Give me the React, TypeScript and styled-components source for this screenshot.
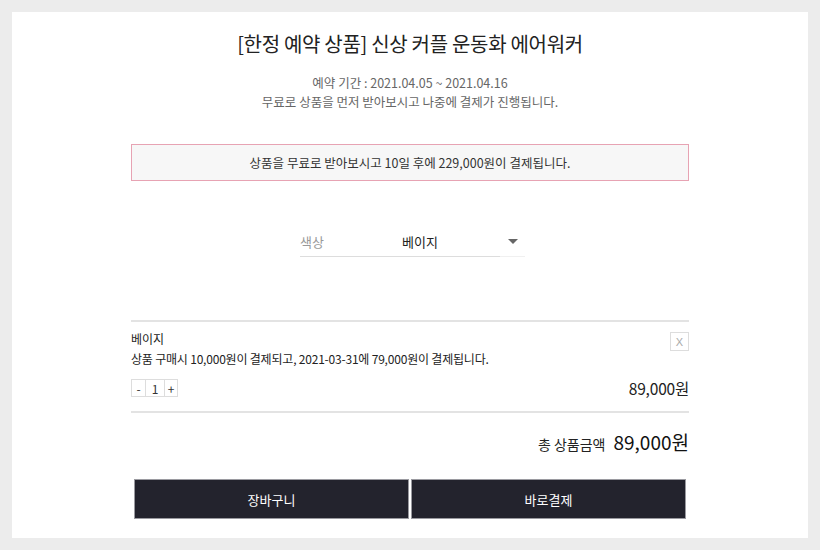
import React from "react";
import styled, { createGlobalStyle } from "styled-components";

const Global = createGlobalStyle`
  html, body { margin: 0; padding: 0; background: #ececec; }
  body { font-family: "Noto Sans CJK KR", "Noto Sans", sans-serif; color: #333; }
  * { box-sizing: border-box; }
`;

const Page = styled.div`
  width: 820px;
  height: 550px;
  padding: 12px;
  background: #ececec;
`;

const Panel = styled.div`
  width: 796px;
  height: 526px;
  background: #fff;
  padding: 17px 0 0;
  display: flex;
  flex-direction: column;
  align-items: center;
`;

const Title = styled.h1`
  margin: 0;
  font-size: 20px;
  line-height: 30px;
  font-weight: 400;
  color: #222;
  letter-spacing: -0.3px;
`;

const Sub = styled.p`
  margin: 14px 0 0;
  font-size: 12.5px;
  line-height: 19px;
  color: #666;
  text-align: center;
  font-weight: 400;
`;

const Notice = styled.div`
  margin-top: 33px;
  width: 558px;
  height: 37px;
  border: 1px solid #e7a3b3;
  background: #f7f7f7;
  display: flex;
  align-items: center;
  justify-content: center;
  font-size: 12.5px;
  color: #333;
`;

const SelectRow = styled.div`
  margin-top: 45px;
  margin-left: 5px;
  width: 225px;
  display: flex;
  height: 31px;
  font-size: 13px;
`;

const SelectLabel = styled.div`
  width: 100px;
  border-bottom: 1px solid #ddd;
  color: #999;
  display: flex;
  align-items: center;
`;

const SelectValue = styled.div`
  width: 100px;
  border-bottom: 1px solid #ddd;
  color: #222;
  display: flex;
  align-items: center;
  padding-left: 2px;
`;

const SelectArrow = styled.div`
  width: 25px;
  border-bottom: 1px solid #f0f0f0;
  display: flex;
  align-items: center;
  justify-content: center;
`;

const Item = styled.div`
  margin-top: 63px;
  width: 558px;
  border-top: 2px solid #e3e3e3;
  border-bottom: 2px solid #e3e3e3;
  padding: 7px 0 14px;
  position: relative;
`;

const ItemName = styled.div`
  font-size: 12px;
  line-height: 20px;
  color: #222;
`;

const ItemDesc = styled.div`
  font-size: 12px;
  letter-spacing: -0.2px;
  line-height: 20px;
  color: #222;
`;

const ItemFoot = styled.div`
  margin-top: 10px;
  display: flex;
  justify-content: space-between;
  align-items: center;
  height: 18px;
`;

const Qty = styled.div`
  display: flex;
  border: 1px solid #ddd;
  height: 18px;
`;

const QtyCell = styled.div<{ $w: number; $sep?: boolean }>`
  width: ${(p) => p.$w}px;
  display: flex;
  align-items: center;
  justify-content: center;
  font-size: 12px;
  color: #333;
  border-left: ${(p) => (p.$sep ? "1px solid #ddd" : "none")};
`;

const Price = styled.div`
  font-size: 15.5px;
  letter-spacing: -0.2px;
  color: #222;
`;

const Remove = styled.div`
  position: absolute;
  right: 0;
  top: 10px;
  width: 19px;
  height: 19px;
  border: 1px solid #ddd;
  display: flex;
  align-items: center;
  justify-content: center;
  font-size: 11px;
  color: #aaa;
  font-family: "Liberation Sans", sans-serif;
`;

const Total = styled.div`
  margin-top: 14px;
  width: 558px;
  display: flex;
  justify-content: flex-end;
  align-items: baseline;
  gap: 8px;
  line-height: 30px;
`;

const TotalLabel = styled.span`
  font-size: 14px;
  color: #222;
`;

const TotalValue = styled.span`
  font-size: 19px;
  color: #111;
`;

const Buttons = styled.div`
  margin-top: 20px;
  width: 552px;
  display: flex;
  gap: 2px;
`;

const Btn = styled.button`
  flex: 1;
  height: 40px;
  background: #23232d;
  border: 1px solid #9a9aa0;
  color: #fff;
  font-family: "Noto Sans CJK KR", sans-serif;
  font-size: 13px;
  cursor: pointer;
`;

export default function App() {
  return (
    <Page>
      <Global />
      <Panel>
        <Title>[한정 예약 상품] 신상 커플 운동화 에어워커</Title>
        <Sub>
          예약 기간 : 2021.04.05 ~ 2021.04.16
          <br />
          무료로 상품을 먼저 받아보시고 나중에 결제가 진행됩니다.
        </Sub>
        <Notice>상품을 무료로 받아보시고 10일 후에 229,000원이 결제됩니다.</Notice>
        <SelectRow>
          <SelectLabel>색상</SelectLabel>
          <SelectValue>베이지</SelectValue>
          <SelectArrow>
            <svg width="10" height="5" viewBox="0 0 10 5">
              <path d="M0 0 L10 0 L5 5 Z" fill="#666" />
            </svg>
          </SelectArrow>
        </SelectRow>
        <Item>
          <ItemName>베이지</ItemName>
          <ItemDesc>상품 구매시 10,000원이 결제되고, 2021-03-31에 79,000원이 결제됩니다.</ItemDesc>
          <ItemFoot>
            <Qty>
              <QtyCell $w={13}>-</QtyCell>
              <QtyCell $w={19} $sep>1</QtyCell>
              <QtyCell $w={13} $sep>+</QtyCell>
            </Qty>
            <Price>89,000원</Price>
          </ItemFoot>
          <Remove>X</Remove>
        </Item>
        <Total>
          <TotalLabel>총 상품금액</TotalLabel>
          <TotalValue>89,000원</TotalValue>
        </Total>
        <Buttons>
          <Btn>장바구니</Btn>
          <Btn>바로결제</Btn>
        </Buttons>
      </Panel>
    </Page>
  );
}
